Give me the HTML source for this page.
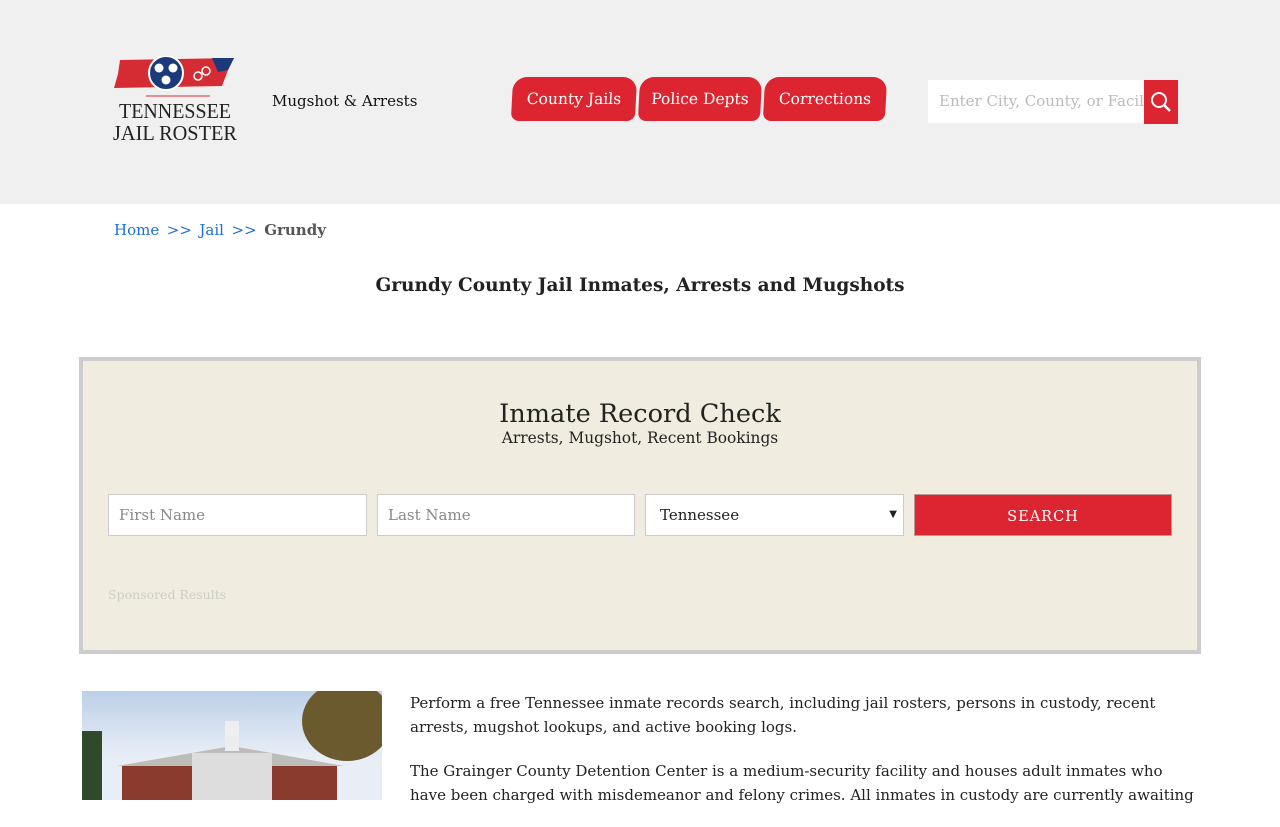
<!DOCTYPE html>
<html><head><meta charset="utf-8"><style>
*{box-sizing:border-box;margin:0;padding:0}
body{width:1280px;height:800px;overflow:hidden;background:#fff;font-family:"DejaVu Serif","Liberation Serif",serif;color:#222}
.hdr{height:204px;background:#f0f0f0;position:relative}
.logo{position:absolute;left:110px;top:56px;width:130px}
.tag{position:absolute;left:272px;top:92px;font-size:15px;color:#111}
.nav{position:absolute;left:512px;top:77px}
.nav div{position:absolute;top:0;background:#dc2530;color:#fff;font-size:15.5px;height:44px;line-height:44px;text-align:center;border-radius:14px 14px 8px 8px;transform:skewX(-3deg)}
.sb{position:absolute;left:928px;top:80px;width:216px;height:43px;background:#fff;color:#bbb;font-size:15px;line-height:43px;padding-left:11px;white-space:nowrap;overflow:hidden}
.sbtn{position:absolute;left:1144px;top:80px;width:34px;height:44px;background:#dc2530}
.bc{position:absolute;left:114px;top:221px;font-size:15px;color:#1a6fd8;word-spacing:-1px}
.bc b{color:#555}
h1{position:absolute;top:275px;width:1280px;text-align:center;font-size:18.5px;font-weight:bold;color:#222}
.box{position:absolute;left:79px;top:357px;width:1122px;height:297px;background:#f0ede0;border:4px solid #ccc}
.box h2{text-align:center;font-weight:normal;font-size:25.6px;margin-top:38px}
.box p.s{text-align:center;font-size:15.4px;margin-top:0}
.in{position:absolute;top:133px;height:42px;background:#fff;border:1px solid #ccc;font-size:15px;color:#888;line-height:40px;padding-left:10px}
.go{position:absolute;top:133px;left:831px;width:258px;height:42px;background:#dc2530;color:#fff;text-align:center;line-height:44px;letter-spacing:1px;font-size:14.5px;border:1px solid #b99}
.sp{position:absolute;left:25px;top:226px;font-size:12.5px;color:#ccc}
.img{position:absolute;left:82px;top:691px;width:300px;height:109px;background:linear-gradient(#bcd0e8,#e8eef6 60%)}
.txt{position:absolute;left:410px;top:691px;width:792px;font-size:15px;line-height:24px;color:#222}
.txt p{margin-bottom:20px}
</style></head><body>
<div class="hdr">
<svg class="logo" viewBox="0 0 130 90" width="130" height="90">
<path d="M10 4 L124 2 L118 14 L112 30 L4 32 L8 18 Z" fill="#d52b33"/>
<path d="M102 2 L124 2 L118 14 L108 16 Z" fill="#1b3a7a"/>
<circle cx="56" cy="17" r="17" fill="#1b3a7a" stroke="#fff" stroke-width="2"/>
<circle cx="49" cy="12" r="4.5" fill="#fff"/><circle cx="63" cy="12" r="4.5" fill="#fff"/><circle cx="56" cy="24" r="4.5" fill="#fff"/>
<circle cx="88" cy="20" r="4" fill="none" stroke="#fff" stroke-width="1.5"/><circle cx="96" cy="15" r="4" fill="none" stroke="#fff" stroke-width="1.5"/>
<line x1="36" y1="40" x2="100" y2="40" stroke="#d52b33"/>
<text x="65" y="62" text-anchor="middle" font-family="Liberation Serif" font-size="21" fill="#222" textLength="112" lengthAdjust="spacingAndGlyphs">TENNESSEE</text>
<text x="65" y="84" text-anchor="middle" font-family="Liberation Serif" font-size="21" fill="#222" textLength="124" lengthAdjust="spacingAndGlyphs">JAIL ROSTER</text>
</svg>
<div class="tag">Mugshot &amp; Arrests</div>
<div class="nav"><div style="left:0;width:124px">County Jails</div><div style="left:127px;width:122px">Police Depts</div><div style="left:252px;width:122px">Corrections</div></div>
<div class="sb">Enter City, County, or Facility</div>
<div class="sbtn"><svg width="34" height="44"><circle cx="15" cy="20" r="7" fill="none" stroke="#fff" stroke-width="2"/><line x1="20" y1="25" x2="26" y2="31" stroke="#fff" stroke-width="2.5"/></svg></div>
</div>
<div class="bc">Home &nbsp;&gt;&gt;&nbsp; Jail &nbsp;&gt;&gt;&nbsp; <b>Grundy</b></div>
<h1>Grundy County Jail Inmates, Arrests and Mugshots</h1>
<div class="box">
<h2>Inmate Record Check</h2>
<p class="s">Arrests, Mugshot, Recent Bookings</p>
<div class="in" style="left:25px;width:259px">First Name</div>
<div class="in" style="left:294px;width:258px">Last Name</div>
<div class="in" style="left:562px;width:259px;color:#222;padding-left:14px">Tennessee<span style="position:absolute;right:6px;font-size:10px">▼</span></div>
<div class="go">SEARCH</div>
<div class="sp">Sponsored Results</div>
</div>
<div class="img"><svg width="300" height="109"><rect x="40" y="75" width="215" height="40" fill="#8a3b2e"/><polygon points="35,75 150,55 262,75" fill="#bcbcb8"/><rect x="110" y="62" width="80" height="50" fill="#ddd"/><rect x="143" y="30" width="14" height="30" fill="#eee"/><rect x="0" y="40" width="20" height="70" fill="#2e4a2a"/><ellipse cx="265" cy="30" rx="45" ry="40" fill="#6b5a2e"/></svg></div>
<div class="txt"><p>Perform a free Tennessee inmate records search, including jail rosters, persons in custody, recent arrests, mugshot lookups, and active booking logs.</p><p>The Grainger County Detention Center is a medium-security facility and houses adult inmates who have been charged with misdemeanor and felony crimes. All inmates in custody are currently awaiting</p></div>
</body></html>
